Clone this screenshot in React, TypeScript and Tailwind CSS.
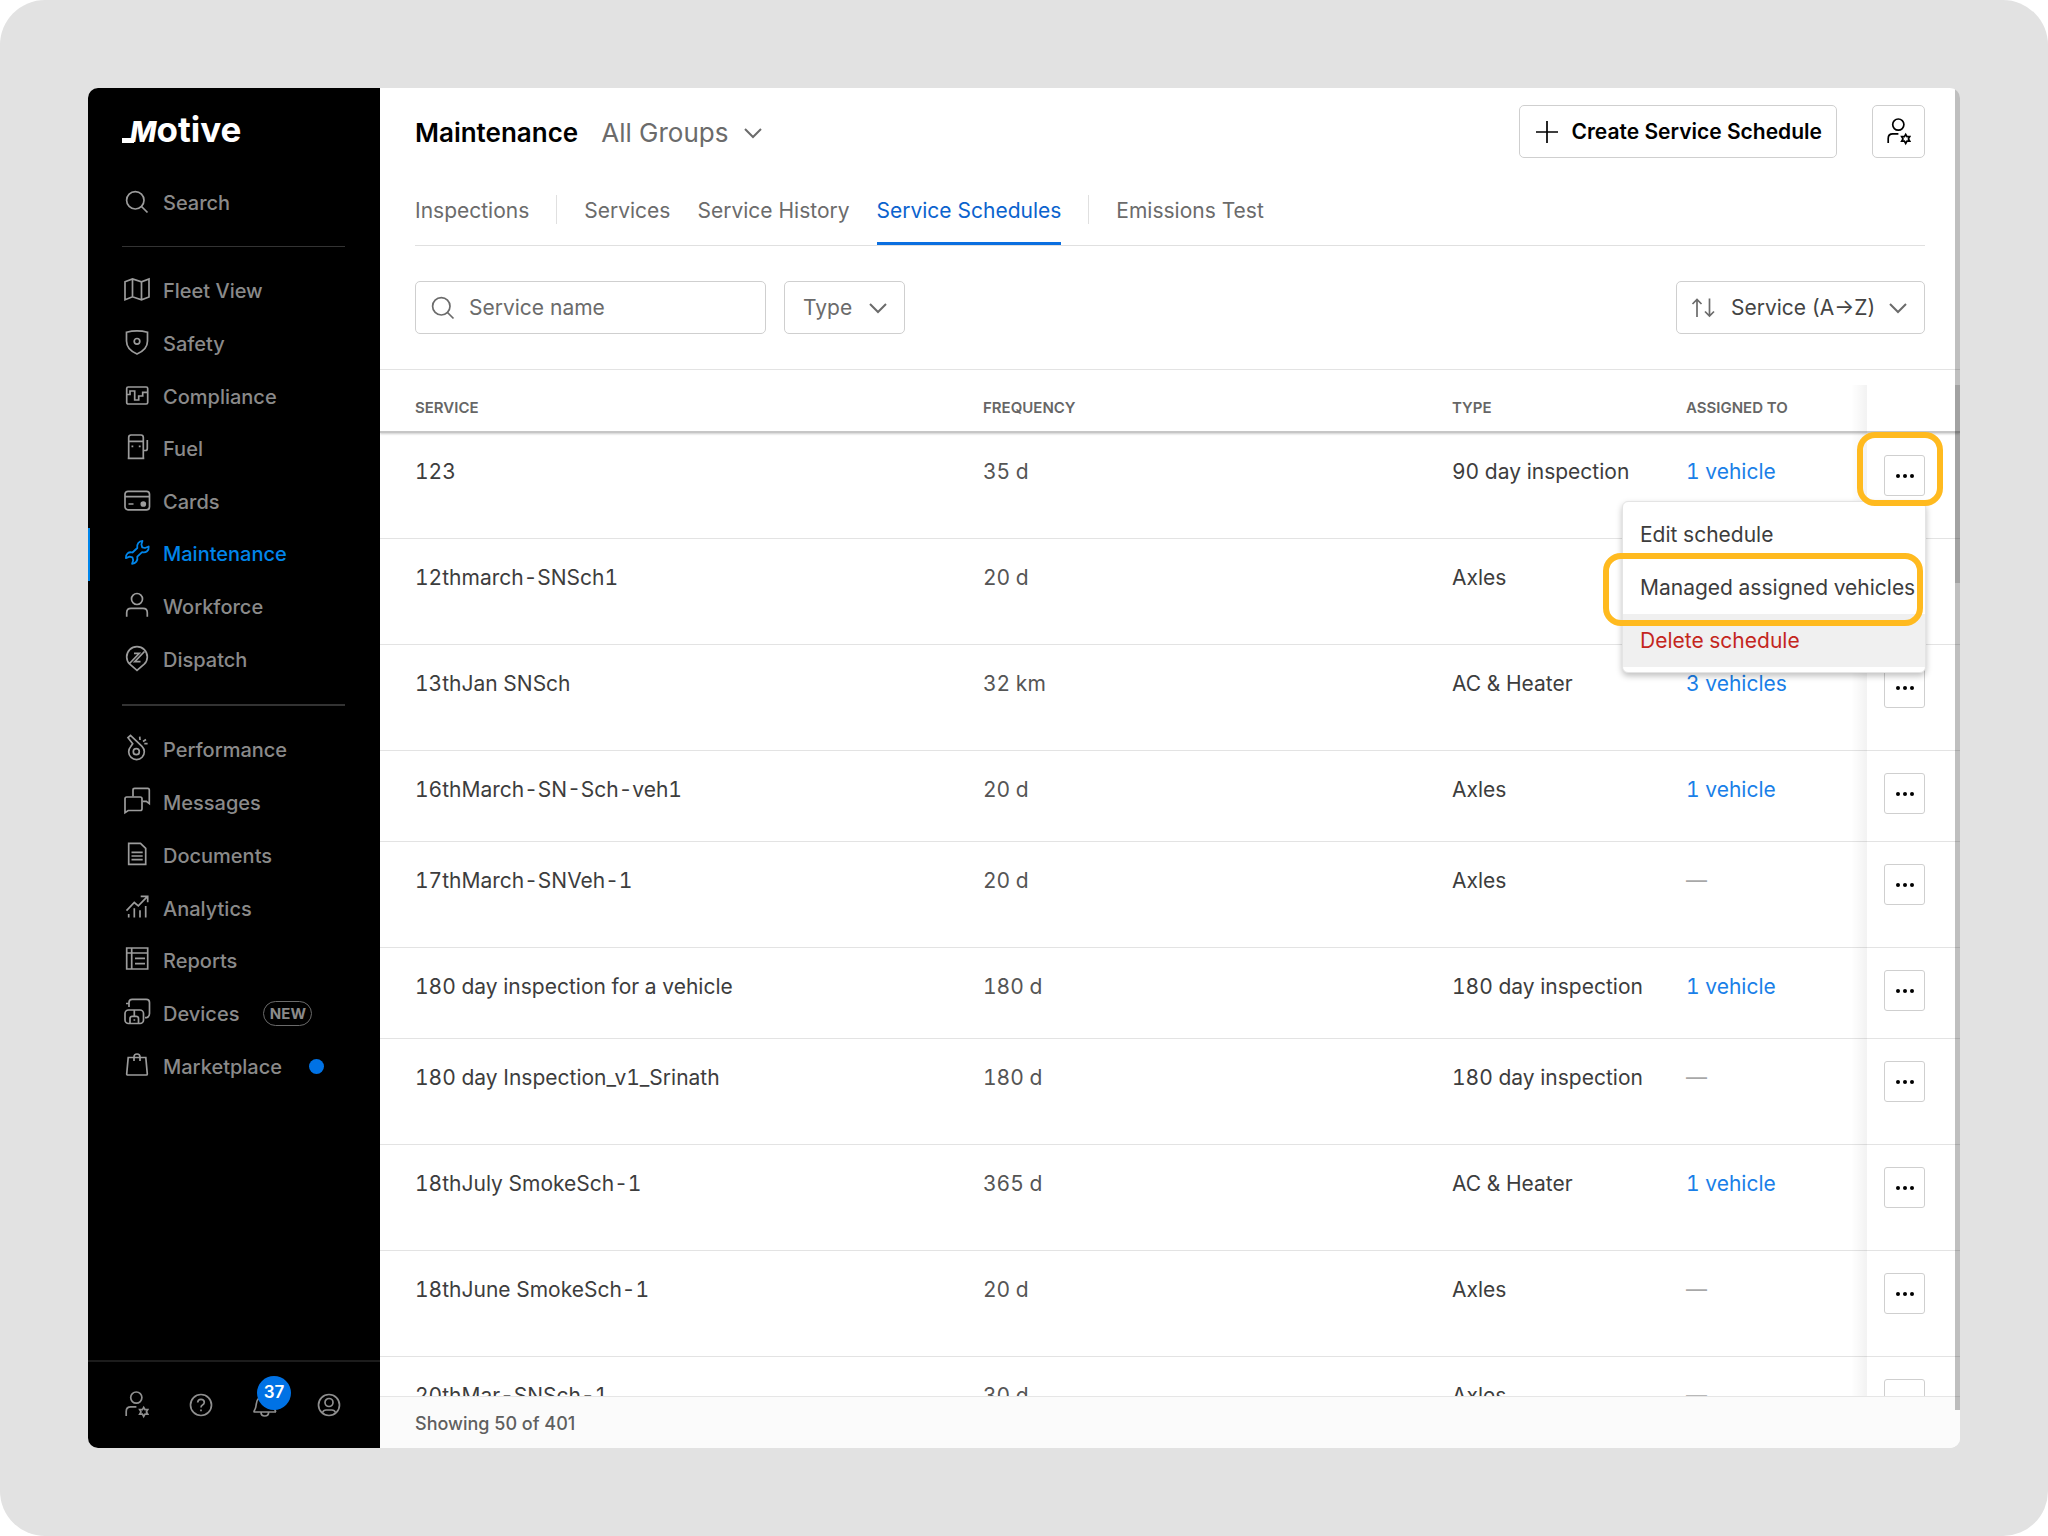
import type { ReactNode } from "react";

type NavItem = {
  label: string;
  icon: ReactNode;
  active?: boolean;
  tag?: string;
  dot?: boolean;
};

type Row = {
  name: string;
  frequency: string;
  type: string;
  assigned: string | null;
  short?: boolean;
  menuOpen?: boolean;
};

// 26x26 outline icon
function Icon({ children, className = "" }: { children: ReactNode; className?: string }) {
  return (
    <svg
      viewBox="0 0 26 26"
      className={`size-[26px] shrink-0 overflow-visible ${className}`}
      fill="none"
      stroke="currentColor"
      strokeWidth="1.7"
      aria-hidden="true"
    >
      {children}
    </svg>
  );
}

function SearchIcon({ className = "" }: { className?: string }) {
  return (
    <Icon className={className}>
      <circle cx="11.3" cy="11.3" r="8.7" />
      <path d="M17.5 17.5 23.5 23.5" />
    </Icon>
  );
}

function UserCogIcon() {
  return (
    <Icon>
      <circle cx="12.3" cy="5.6" r="5.6" />
      <path d="M2.2 24v-4.5q0-4.6 4.6-4.6h5.6" />
      <path d="M19.7 15.4l1.3 2.3 2.7-.1-1.3 2.3 1.3 2.3-2.7-.1-1.3 2.3-1.3-2.3-2.7.1 1.3-2.3-1.3-2.3 2.7.1z" />
    </Icon>
  );
}

function Chevron({ className = "" }: { className?: string }) {
  return (
    <svg
      viewBox="0 0 20 12"
      className={`pointer-events-none h-3 w-5 shrink-0 ${className}`}
      fill="none"
      stroke="currentColor"
      strokeWidth="2"
      aria-hidden="true"
    >
      <path d="M2 2l8 8 8-8" />
    </svg>
  );
}

const primaryNav: NavItem[] = [
  {
    label: "Fleet View",
    icon: <path d="M1 4.8 8.5 2l9 2.8L25 2v18l-7.5 2.8-9-3L1 22.8zM8.5 2v17.8M17.5 4.8v18" />,
  },
  {
    label: "Safety",
    icon: (
      <>
        <path d="M2.5 2.2Q13-.6 23.5 2.2V11q0 8.5-10.5 13Q2.5 19.5 2.5 11z" />
        <circle cx="13" cy="11.3" r="2.8" />
      </>
    ),
  },
  {
    label: "Compliance",
    icon: (
      <>
        <rect x="2.7" y="4" width="21" height="17" rx="1.5" />
        <path d="M2.7 11.5H6V8h4.7v9h4v-4h4V9.3h5" />
      </>
    ),
  },
  {
    label: "Fuel",
    icon: (
      <>
        <path d="M4.7 23V2.5Q4.7 0 7 0h10q2.3 0 2.3 2.500V23M3.700 23.300h16.600M4.700 6.300h14.600" />
        <path d="M19.300 15.500h2.200q1.800 0 1.800-2V5" />
        <path d="M7.500 11.300h1.800M14.800 11.300h1.800" />
      </>
    ),
  },
  {
    label: "Cards",
    icon: (
      <>
        <rect x="1" y="3.300" width="24.500" height="18.500" rx="3" />
        <path d="M1 8.700h24.500M4.500 16h5" />
        <circle cx="19.300" cy="16" r="2" fill="currentColor" />
      </>
    ),
  },
  {
    label: "Maintenance",
    active: true,
    icon: (
      <path
        strokeWidth="1.800"
        strokeLinejoin="round"
        d="M18.500.8C15 1 12.500 4 13.300 8L8.500 12.500C4.500 11.500 1.500 14 1.900 18.100L5.600 16.600 8.400 17.300 9.200 20.200 8.100 23.800C11.600 23.600 14.100 20.600 13.300 16.600L18.100 12.100C22.100 13.100 25.100 10.600 24.700 6.500L21 8 18.200 7.300 17.400 4.400z"
      />
    ),
  },
  {
    label: "Workforce",
    icon: (
      <>
        <circle cx="13" cy="6" r="5.500" />
        <path d="M2.700 23.700v-4q0-4.300 4.300-4.300h12q4.300 0 4.300 4.300v4" />
      </>
    ),
  },
  {
    label: "Dispatch",
    icon: (
      <>
        <path d="M13 24.300 5.800 18.200A10.300 10.300 0 1 1 20.200 18.200z" />
        <path d="M5.500 17.500 15.300 7.300H10M20.500 5.500 10.700 15.700H16.500" />
      </>
    ),
  },
];

const secondaryNav: NavItem[] = [
  {
    label: "Performance",
    icon: (
      <>
        <path d="M8.700 7.700 4 1.700 6.500-.500 18 10.300A7.800 7.800 0 1 1 6.800 10.500z" />
        <circle cx="12.300" cy="15.700" r="3" />
        <path d="M15.700.7l.3 3.300M22 3.500l-3 2M20.300 7.700h3.300" />
      </>
    ),
  },
  {
    label: "Messages",
    icon: (
      <>
        <path d="M9 7.500V1Q9-.700 10.700-.700h13q1.600 0 1.600 1.700v13.600l-3-2.200h-3.700" />
        <path d="M1 23.700V9.700Q1 8 2.700 8h13.600Q18 8 18 9.700v10.100q0 1.700-1.700 1.700H4.200z" />
      </>
    ),
  },
  {
    label: "Documents",
    icon: <path d="M4.700 1.300h11.800l5.200 5V22.300h-17zM7.500 10.300h11.200M7.500 14h11.200M7.500 17.700h11.200" />,
  },
  {
    label: "Analytics",
    icon: (
      <>
        <path d="M2.500 15.700 10.300 7.500l4 3.300L23.300 1.700M16.700 1.300h7v6" />
        <path d="M4.700 19v3.500M10.300 13.300v9.200M16 15.300v7.200M21.700 11v11.500" />
      </>
    ),
  },
  {
    label: "Reports",
    icon: <path d="M2.700 1h21v21h-21zM2.700 6h21M7.700 1v21M11 11.300h10M11 16.700h10" />,
  },
  {
    label: "Devices",
    tag: "NEW",
    icon: (
      <>
        <path d="M2 3.500h3M5 7V2.500Q5-.700 8.200-.700h14Q25.500-.700 25.500 2.500v11q0 4.200-4.500 4.200" />
        <rect x="1" y="10" width="18.500" height="13.500" rx="3.500" />
        <path d="M6 23.500v-5q0-2.200 2.200-2.200h4q2.300 0 2.300 2.200v5M10.300 10v6M9.500 20h1.700" />
      </>
    ),
  },
  {
    label: "Marketplace",
    dot: true,
    icon: <path d="M4.200 4.500h17.600L23.300 21q0 1-1 1H3.700q-1 0-1-1zM10 8V4Q10 1 13 1t3 3v4" />,
  },
];

const rows: Row[] = [
  { name: "123", frequency: "35 d", type: "90 day inspection", assigned: "1 vehicle", menuOpen: true },
  { name: "12thmarch-SNSch1", frequency: "20 d", type: "Axles", assigned: "" },
  { name: "13thJan SNSch", frequency: "32 km", type: "AC & Heater", assigned: "3 vehicles" },
  { name: "16thMarch-SN-Sch-veh1", frequency: "20 d", type: "Axles", assigned: "1 vehicle", short: true },
  { name: "17thMarch-SNVeh-1", frequency: "20 d", type: "Axles", assigned: null },
  { name: "180 day inspection for a vehicle", frequency: "180 d", type: "180 day inspection", assigned: "1 vehicle", short: true },
  { name: "180 day Inspection_v1_Srinath", frequency: "180 d", type: "180 day inspection", assigned: null },
  { name: "18thJuly SmokeSch-1", frequency: "365 d", type: "AC & Heater", assigned: "1 vehicle" },
  { name: "18thJune SmokeSch-1", frequency: "20 d", type: "Axles", assigned: null },
  { name: "20thMar-SNSch-1", frequency: "30 d", type: "Axles", assigned: null },
];

function NavList({ items }: { items: NavItem[] }) {
  return (
    <>
      {items.map((item) => (
        <a
          key={item.label}
          href="#"
          className={`flex min-h-0 flex-1 items-center border-l-2 pl-[34px] text-[20px] font-medium ${
            item.active ? "border-[#0085ea] text-[#0085ea]" : "border-transparent text-[#8a8a8a]"
          }`}
        >
          <Icon className={item.active ? "-mt-0.5" : "-mt-0.5 text-[#9c9c9c]"}>{item.icon}</Icon>
          <span className="ml-[13px]">{item.label}</span>
          {item.tag && (
            <span className="ml-6 flex h-[25px] w-[49px] items-center justify-center rounded-full border border-[#6a6a6a] text-[15px] font-bold">
              {item.tag}
            </span>
          )}
          {item.dot && <span className="ml-[27px] size-[15px] rounded-full bg-[#0072e5]" />}
        </a>
      ))}
    </>
  );
}

function Sidebar() {
  return (
    <aside className="flex w-[292px] shrink-0 flex-col bg-black">
      {/* Wordmark */}
      <div className="relative ml-[34px] mt-5 flex h-[42px] items-baseline pl-2 leading-[42px] text-white">
        <span className="absolute bottom-[7px] left-0 h-[5px] w-3 bg-white" />
        <span className="text-[28px] font-extrabold italic">M</span>
        <span className="text-[35px] font-bold">otive</span>
      </div>

      <a href="#" className="mt-[27px] flex h-[52px] items-center pl-9 text-[20px] font-medium text-[#8a8a8a]">
        <SearchIcon className="-mt-0.5 text-[#9c9c9c]" />
        <span className="ml-[13px]">Search</span>
      </a>
      <hr className="ml-[34px] mr-[35px] mt-[17px] border-[#333]" />

      <nav className="mt-[18px] flex h-[421px] flex-col">
        <NavList items={primaryNav} />
      </nav>
      <hr className="ml-[34px] mr-[35px] mt-[18px] border-t-2 border-[#333]" />
      <nav className="mt-[18px] flex h-[369px] flex-col">
        <NavList items={secondaryNav} />
      </nav>

      <div className="mt-auto flex h-[88px] items-center gap-[38px] border-t-2 border-[#1c1c1c] pl-9 text-[#8f8f8f]">
        <button aria-label="Admin">
          <UserCogIcon />
        </button>
        <button aria-label="Help">
          <Icon>
            <circle cx="13" cy="13" r="10.500" />
            <path d="M9.700 10.500q.2-3.200 3.300-3.200t3.300 2.900q0 1.700-1.800 2.700-1.500.8-1.500 2.600M13 17.500v1.800" />
          </Icon>
        </button>
        <button aria-label="Notifications" className="relative">
          <Icon>
            <path d="M1.500 20h22.500M1.700 20q2.300-3.500 2.600-8 .5-7.500 8.500-7.500t8.500 7.500q.3 4.500 2.600 8M9 20.300q0 3.700 3.800 3.700t3.800-3.700" />
          </Icon>
          <span className="absolute -top-4 left-[5px] flex size-[34px] items-center justify-center rounded-full bg-[#0072e5] text-[17px] font-semibold text-white">
            37
          </span>
        </button>
        <button aria-label="Account">
          <Icon>
            <circle cx="13" cy="13" r="10.500" />
            <circle cx="13" cy="10.500" r="4" />
            <path d="M6.500 20.500q1-2.500 3.500-2.500h6q2.500 0 3.500 2.500" />
          </Icon>
        </button>
      </div>
    </aside>
  );
}

function Tab({ label, active }: { label: string; active?: boolean }) {
  return (
    <a
      href="#"
      className={`flex items-center self-stretch border-b-[3px] pt-[5px] ${
        active ? "border-[#0b6fe0] text-[#0b63ce]" : "border-transparent"
      }`}
    >
      {label}
    </a>
  );
}

function TabDivider() {
  return <span className="h-[29px] w-px bg-[#e0e0e0]" />;
}

function RowMenu() {
  return (
    <div
      role="menu"
      className="absolute right-[34px] top-[68px] z-10 flex w-[304px] flex-col rounded-md border border-[#e4e4e4] bg-white pb-[5px] pt-[6px] text-[21px] text-[#3d3d3d] shadow-[0_3px_6px_rgba(0,0,0,0.25)]"
    >
      <button role="menuitem" className="h-[53px] px-[17px] text-left">
        Edit schedule
      </button>
      <div className="relative">
        <button role="menuitem" className="h-[53px] whitespace-nowrap px-[17px] text-left">
          Managed assigned vehicles
        </button>
        <span className="pointer-events-none absolute -bottom-3 -left-5 -top-2 right-0.5 rounded-[18px] border-[6px] border-[#ffba1f]" />
      </div>
      <button role="menuitem" className="h-[53px] bg-[#f0f0f0] px-[17px] text-left text-[#c4261d]">
        Delete schedule
      </button>
    </div>
  );
}

function ScheduleTable() {
  return (
    <table className="w-full table-fixed border-separate border-spacing-0 text-left">
      <colgroup>
        <col />
        <col className="w-[469px]" />
        <col className="w-[234px]" />
        <col className="w-[181px]" />
        <col className="w-[93px]" />
      </colgroup>
      <thead>
        <tr className="h-[63px] text-[15px] text-[#666] shadow-[0_1px_2px_rgba(0,0,0,0.2)] [&>th]:border-b-2 [&>th]:border-[#c6c6c6] [&>th]:pt-[15px] [&>th]:font-semibold">
          <th className="pl-[35px]">SERVICE</th>
          <th>FREQUENCY</th>
          <th>TYPE</th>
          <th>ASSIGNED TO</th>
          <th aria-label="Actions" />
        </tr>
      </thead>
      <tbody className="text-[21px] leading-7 tabular-nums text-[#3d3d3d]">
        {rows.map((row) => (
          <tr
            key={row.name}
            className={`align-top [&>td]:border-b [&>td]:border-[#e3e3e3] ${row.short ? "h-[91px]" : "h-[106px]"}`}
          >
            <td className="pl-[35px] pt-[25px]">{row.name}</td>
            <td className="pt-[25px] text-[#555]">{row.frequency}</td>
            <td className="pt-[25px]">{row.type}</td>
            <td className="pt-[25px]">
              {row.assigned === null ? (
                <span className="text-[#a8a8a8]">—</span>
              ) : (
                <a href="#" className="text-[#1a7fe8]">
                  {row.assigned}
                </a>
              )}
            </td>
            <td className="relative pt-[22px]">
              <div className="relative ml-[17px] size-[41px]">
                <button
                  aria-label={`Actions for ${row.name}`}
                  className="flex size-full items-center justify-center gap-[3px] rounded-[3px] border border-[#cfcfcf] bg-white"
                >
                  <span className="size-1 rounded-full bg-black" />
                  <span className="size-1 rounded-full bg-black" />
                  <span className="size-1 rounded-full bg-black" />
                </button>
                {row.menuOpen && (
                  <span className="pointer-events-none absolute -bottom-[10px] -left-[27px] -right-[18px] -top-[23px] z-20 rounded-[18px] border-[6px] border-[#ffba1f]" />
                )}
              </div>
              {row.menuOpen && <RowMenu />}
            </td>
          </tr>
        ))}
      </tbody>
    </table>
  );
}

export default function App() {
  return (
    <div className="h-screen bg-white font-['Inter',sans-serif]">
      <div className="h-full rounded-[45px] bg-[#e2e2e2] p-[88px]">
        <div className="flex h-full overflow-hidden rounded-[10px] bg-white">
          <Sidebar />
          <main className="relative flex min-w-0 flex-1 flex-col">
            <header className="flex items-center px-[35px] pt-[17px]">
              <h1 className="pt-0.5 text-[26px] font-semibold text-black">Maintenance</h1>
              <div className="relative ml-[23px] flex items-center pt-0.5 text-[26px] text-[#6b6b6b]">
                <select aria-label="Group" className="appearance-none pr-[34px] outline-none">
                  <option>All Groups</option>
                </select>
                <Chevron className="absolute right-0" />
              </div>
              <button className="ml-auto flex h-[53px] items-center rounded-[5px] border border-[#cfcfcf] px-[14px] text-[21px] font-semibold text-black">
                <Icon>
                  <path d="M13 2v22M2 13h22" />
                </Icon>
                <span className="ml-3">Create Service Schedule</span>
              </button>
              <button
                aria-label="Manage users"
                className="ml-[35px] flex size-[53px] items-center justify-center rounded-[5px] border border-[#cfcfcf] text-black"
              >
                <UserCogIcon />
              </button>
            </header>

            <nav className="mx-[35px] mt-4 flex h-[72px] items-center gap-[27px] border-b border-[#e0e0e0] text-[21px] text-[#6b6b6b]">
              <Tab label="Inspections" />
              <TabDivider />
              <Tab label="Services" />
              <Tab label="Service History" />
              <Tab label="Service Schedules" active />
              <TabDivider />
              <Tab label="Emissions Test" />
            </nav>

            <div className="flex border-b border-[#e3e3e3] px-[35px] py-[35px] text-[21px] text-[#6b6b6b]">
              <label className="flex h-[53px] w-[351px] items-center rounded-[5px] border border-[#cfcfcf] px-[14px]">
                <SearchIcon />
                <input
                  type="text"
                  aria-label="Service name"
                  placeholder="Service name"
                  className="ml-[13px] min-w-0 flex-1 outline-none placeholder:text-[#6b6b6b]"
                />
              </label>
              <div className="relative ml-[18px] flex items-center">
                <select
                  aria-label="Type"
                  className="h-[53px] w-[121px] appearance-none rounded-[5px] border border-[#cfcfcf] pl-[18px] outline-none"
                >
                  <option>Type</option>
                </select>
                <Chevron className="absolute right-[17px]" />
              </div>
              <div className="relative ml-auto flex items-center">
                <Icon className="pointer-events-none absolute left-[14px]">
                  <path d="M7 22V4.500M2.500 9 7 4.500 11.500 9M19.500 3.500V21M15 16.500l4.500 4.500 4.500-4.500" />
                </Icon>
                <select
                  aria-label="Sort by"
                  className="h-[53px] w-[249px] appearance-none rounded-[5px] border border-[#cfcfcf] pl-[54px] text-[#444] outline-none"
                >
                  <option>Service (A→Z)</option>
                </select>
                <Chevron className="absolute right-[17px]" />
              </div>
            </div>

            <div className="relative min-h-0 flex-1 overflow-hidden">
              <ScheduleTable />
              {/* Pinned column edge */}
              <span className="pointer-events-none absolute bottom-0 right-[93px] top-[15px] w-4 bg-linear-to-r from-transparent to-black/5" />
            </div>

            <footer className="flex h-[52px] items-center border-t border-[#e6e6e6] bg-[#fbfbfb] px-[35px] pt-0.5 text-[18px] font-medium text-[#5f5f5f]">
              Showing 50 of 401
            </footer>

            {/* Scroll track and thumb */}
            <div className="absolute bottom-[38px] right-0 top-0 z-20 w-[5px] bg-black/25">
              <div className="mt-[297px] h-[198px] bg-black/15" />
            </div>
          </main>
        </div>
      </div>
    </div>
  );
}
